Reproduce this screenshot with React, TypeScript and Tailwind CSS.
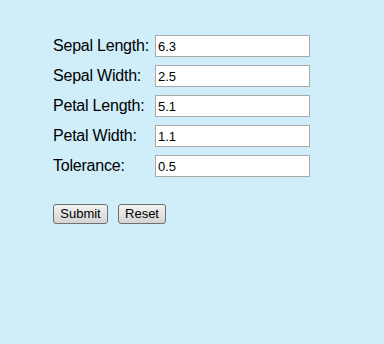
import React from "react";

const rows = [
  ["Sepal Length:", "6.3"],
  ["Sepal Width:", "2.5"],
  ["Petal Length:", "5.1"],
  ["Petal Width:", "1.1"],
  ["Tolerance:", "0.5"],
];

export default function App() {
  return (
    <div
      className="w-[384px] h-[344px] bg-[#d0eefa] pl-[53px] pt-[35px]"
      style={{ fontFamily: '"Liberation Sans", Arial, sans-serif' }}
    >
      <div className="flex flex-col gap-[8px]">
        {rows.map(([label, value]) => (
          <div key={label} className="flex items-center h-[22px]">
            <span className="w-[102px] text-[16px] tracking-[-0.22px] leading-[22px] text-black">{label}</span>
            <input
              defaultValue={value}
              className="w-[155px] h-[22px] border border-[#a9a9a9] bg-white px-[2px] text-[13px] text-black outline-none"
            />
          </div>
        ))}
      </div>
      <div className="flex gap-[10px] mt-[27px]">
        <button className="h-[20px] w-[55px] rounded-[3px] border border-[#707070] bg-gradient-to-b from-[#f2f2f2] to-[#d4d4d4] text-[13px] leading-[18px] text-black">
          Submit
        </button>
        <button className="h-[20px] w-[48px] rounded-[3px] border border-[#707070] bg-gradient-to-b from-[#f2f2f2] to-[#d4d4d4] text-[13px] leading-[18px] text-black">
          Reset
        </button>
      </div>
    </div>
  );
}
